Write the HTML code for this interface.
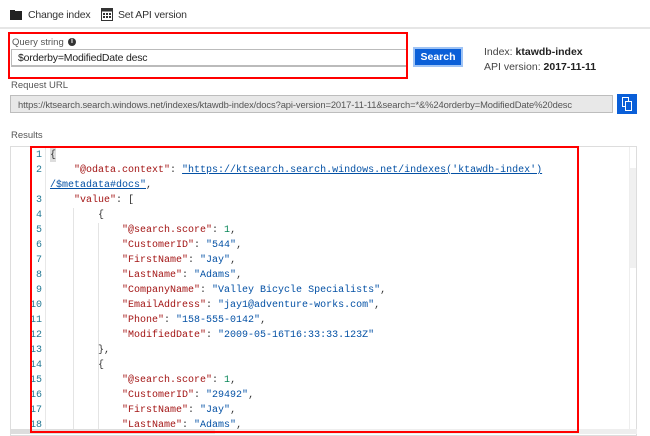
<!DOCTYPE html>
<html><head><style>
*{margin:0;padding:0;box-sizing:border-box}
body{width:650px;height:434px;overflow:hidden;background:#fff;font-family:"Liberation Sans",sans-serif;font-size:11px;color:#333;position:relative}
.a{position:absolute}
.code{font-family:"Liberation Mono",monospace;font-size:10px;line-height:15px;white-space:pre}
.k{color:#a31515}.s{color:#0451a5}.n{color:#098658}.p{color:#333}
.u{color:#0451a5;text-decoration:underline}
.ln{position:absolute;left:16px;width:26px;text-align:right;color:#237893;font-family:"Liberation Mono",monospace;font-size:10px;line-height:15px}
</style></head><body>
<!-- toolbar -->
<div class="a" style="left:10px;top:10px;width:5px;height:2px;background:#222"></div>
<div class="a" style="left:10px;top:11px;width:12px;height:9px;background:#222"></div>
<div class="a" style="left:28px;top:9px;font-size:10.5px;color:#333;letter-spacing:-0.2px">Change index</div>
<svg class="a" style="left:101px;top:8px" width="12" height="13" viewBox="0 0 12 13"><rect x="0.5" y="0.5" width="11" height="12" fill="#fff" stroke="#333"/><rect x="0.5" y="0.5" width="11" height="3" fill="#333"/><g fill="#333"><rect x="2" y="5" width="2" height="2"/><rect x="5" y="5" width="2" height="2"/><rect x="8" y="5" width="2" height="2"/><rect x="2" y="8" width="2" height="2"/><rect x="5" y="8" width="2" height="2"/><rect x="8" y="8" width="2" height="2"/></g></svg>
<div class="a" style="left:118px;top:9px;font-size:10.5px;color:#333;letter-spacing:-0.2px">Set API version</div>
<div class="a" style="left:0;top:27px;width:650px;height:2px;background:#e6e6e6"></div>
<!-- query -->
<div class="a" style="left:12px;top:37px;color:#555;font-size:9.5px">Query string</div>
<div class="a" style="left:68px;top:38px;width:8px;height:8px;border-radius:50%;background:#333;color:#fff;font-size:7px;line-height:8px;text-align:center;font-weight:bold">i</div>
<div class="a" style="left:11px;top:49px;width:396px;height:18px;border:1px solid #bbb;border-bottom:2px solid #bbb;padding:2px 6px;font-size:10.5px;color:#222;letter-spacing:-0.2px">$orderby=ModifiedDate desc</div>
<div class="a" style="left:8px;top:32px;width:400px;height:47px;border:2px solid #f00"></div>
<div class="a" style="left:413px;top:47px;width:50px;height:20px;background:#0a5fd8;border:2px solid #9ec3f5;color:#fff;font-weight:bold;font-size:10.5px;text-align:center;line-height:16px">Search</div>
<div class="a" style="left:484px;top:46px;font-size:10.5px;color:#444">Index: <b style="color:#222">ktawdb-index</b></div>
<div class="a" style="left:484px;top:61px;font-size:10.5px;color:#444">API version: <b style="color:#222">2017-11-11</b></div>
<!-- request url -->
<div class="a" style="left:11px;top:80px;font-size:9.5px;color:#555">Request URL</div>
<div class="a" style="left:10px;top:95px;width:603px;height:18px;background:#e8e8e8;border:1px solid #bdbdbd;padding:3px 7px;font-size:9.4px;color:#555;white-space:nowrap;overflow:hidden;letter-spacing:-0.1px">https://ktsearch.search.windows.net/indexes/ktawdb-index/docs?api-version=2017-11-11&amp;search=*&amp;%24orderby=ModifiedDate%20desc</div>
<div class="a" style="left:617px;top:94px;width:20px;height:20px;background:#0a5fd8"></div>
<div class="a" style="left:622px;top:97px;width:7px;height:10px;border:1.5px solid #fff;background:#0a5fd8"></div>
<div class="a" style="left:625px;top:101px;width:7px;height:10px;border:1.5px solid #fff;background:#0a5fd8"></div>
<!-- results -->
<div class="a" style="left:11px;top:130px;font-size:9.5px;color:#555">Results</div>
<div class="a" style="left:10px;top:146px;width:627px;height:290px;border:1px solid #ddd"></div>
<div class="a" style="left:45px;top:147px;width:1px;height:287px;background:#e8e8e8"></div>
<div class="a" style="left:73px;top:208px;width:1px;height:226px;background:#e4e4e4"></div>
<div class="a" style="left:98px;top:223px;width:1px;height:211px;background:#e4e4e4"></div>
<div class="a" style="left:629px;top:147px;width:1px;height:287px;background:#eee"></div>
<div class="a" style="left:630px;top:168px;width:6px;height:100px;background:#f0f0f0"></div>
<div class="a" style="left:10px;top:429px;width:627px;height:5px;background:#eee"></div>
<div class="a" style="left:10px;top:429px;width:205px;height:5px;background:#ddd"></div>
<div class="a" style="left:50px;top:148px;width:6px;height:14px;background:#ddd"></div>
<div class="ln" style="top:148px">1<br>2<br><br>3<br>4<br>5<br>6<br>7<br>8<br>9<br>10<br>11<br>12<br>13<br>14<br>15<br>16<br>17<br>18</div>
<div class="a code" style="left:50px;top:148px"><span class="p">{</span>
    <span class="k">"@odata.context"</span>: <span class="u">"https://ktsearch.search.windows.net/indexes('ktawdb-index')</span>
<span class="u">/$metadata#docs"</span>,
    <span class="k">"value"</span>: [
        {
            <span class="k">"@search.score"</span>: <span class="n">1</span>,
            <span class="k">"CustomerID"</span>: <span class="s">"544"</span>,
            <span class="k">"FirstName"</span>: <span class="s">"Jay"</span>,
            <span class="k">"LastName"</span>: <span class="s">"Adams"</span>,
            <span class="k">"CompanyName"</span>: <span class="s">"Valley Bicycle Specialists"</span>,
            <span class="k">"EmailAddress"</span>: <span class="s">"jay1@adventure-works.com"</span>,
            <span class="k">"Phone"</span>: <span class="s">"158-555-0142"</span>,
            <span class="k">"ModifiedDate"</span>: <span class="s">"2009-05-16T16:33:33.123Z"</span>
        },
        {
            <span class="k">"@search.score"</span>: <span class="n">1</span>,
            <span class="k">"CustomerID"</span>: <span class="s">"29492"</span>,
            <span class="k">"FirstName"</span>: <span class="s">"Jay"</span>,
            <span class="k">"LastName"</span>: <span class="s">"Adams"</span>,</div>
<div class="a" style="left:30px;top:146px;width:549px;height:287px;border:2px solid #f00"></div>
</body></html>
